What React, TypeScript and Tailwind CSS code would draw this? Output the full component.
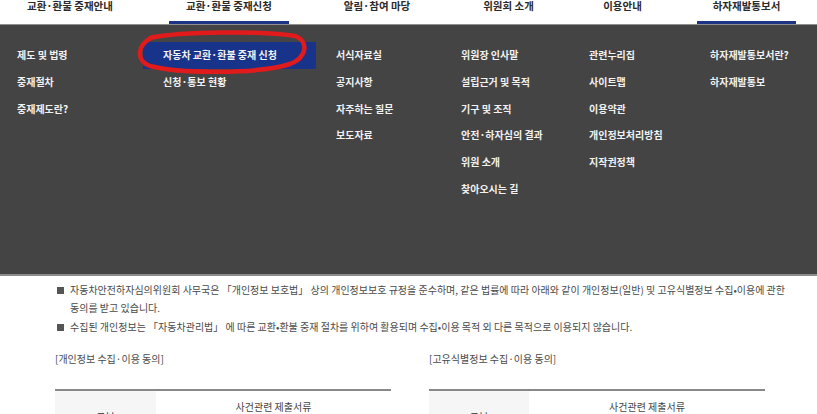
import React from "react";

const navItems = [
  { label: "교환·환불 중재안내", w: "w-[118px]", active: false },
  { label: "교환·환불 중재신청", w: "w-[120px]", active: true },
  { label: "알림·참여 마당", w: "w-[98px]", active: false },
  { label: "위원회 소개", w: "w-[81px]", active: false },
  { label: "이용안내", w: "w-[69px]", active: false },
  { label: "하자재발통보서", w: "w-[99px]", active: true },
];

const gaps = ["", "ml-[40px]", "ml-[39px]", "ml-[42px]", "ml-[39px]", "ml-[40px]"];

function SubItem({ children }: { children: React.ReactNode }) {
  return (
    <div className="h-[26.67px] flex items-center whitespace-nowrap text-[10px] leading-[10px] font-bold text-[#f2f2f2]">
      {children}
    </div>
  );
}

export default function App() {
  return (
    <div
      className="relative w-[817px] h-[414px] overflow-hidden bg-white"
      style={{ fontFamily: '"Noto Sans CJK KR", "Noto Sans", sans-serif' }}
    >
      {/* top nav */}
      <div className="flex h-[24px] pl-[11px] bg-white">
        {navItems.map((n, i) => (
          <div key={n.label} className={`${n.w} ${gaps[i]} flex flex-col`}>
            <div className="flex-1 text-center text-[10.5px] leading-[11px] font-bold text-[#2a2a2a] whitespace-nowrap">
              {n.label}
            </div>
            <div className={`h-[3px] ${n.active ? "bg-[#1c3386]" : ""}`} />
          </div>
        ))}
      </div>
      <div className="h-[1px] bg-[#8f8f8f]" />

      {/* dark mega menu */}
      <div className="h-[249px] bg-[#444444] pt-[17px] flex">
        <div className="w-[143px] pl-[17px]">
          <SubItem>제도 및 법령</SubItem>
          <SubItem>중재절차</SubItem>
          <SubItem>중재제도란?</SubItem>
        </div>
        <div className="w-[193px]">
          <div className="w-[173px] bg-[#17348a] pl-[20px]">
            <SubItem>자동차 교환·환불 중재 신청</SubItem>
          </div>
          <div className="pl-[20px]">
            <SubItem>신청·통보 현황</SubItem>
          </div>
        </div>
        <div className="w-[125px]">
          <SubItem>서식자료실</SubItem>
          <SubItem>공지사항</SubItem>
          <SubItem>자주하는 질문</SubItem>
          <SubItem>보도자료</SubItem>
        </div>
        <div className="w-[128px]">
          <SubItem>위원장 인사말</SubItem>
          <SubItem>설립근거 및 목적</SubItem>
          <SubItem>기구 및 조직</SubItem>
          <SubItem>안전·하자심의 결과</SubItem>
          <SubItem>위원 소개</SubItem>
          <SubItem>찾아오시는 길</SubItem>
        </div>
        <div className="w-[121px]">
          <SubItem>관련누리집</SubItem>
          <SubItem>사이트맵</SubItem>
          <SubItem>이용약관</SubItem>
          <SubItem>개인정보처리방침</SubItem>
          <SubItem>지작권정책</SubItem>
        </div>
        <div className="flex-1">
          <SubItem>하자재발통보서란?</SubItem>
          <SubItem>하자재발통보</SubItem>
        </div>
      </div>
      <div className="h-[2px] bg-[#8c8c8c]" />

      {/* content */}
      <div className="pt-[5px] text-[10px] text-[#4a4a4a]">
        <div className="pl-[57px] flex">
          <div className="w-[7px] h-[7px] bg-[#555555] mt-[5.5px] shrink-0" />
          <div className="pl-[6px] leading-[18px]">
            <div className="whitespace-nowrap">
              자동차안전하자심의위원회 사무국은 「개인정보 보호법」 상의 개인정보보호 규정을 준수하며, 같은 법률에 따라 아래와 같이 개인정보(일반) 및 고유식별정보 수집•이용에 관한
            </div>
            <div className="whitespace-nowrap">동의를 받고 있습니다.</div>
          </div>
        </div>
        <div className="pl-[57px] flex mt-[1px]">
          <div className="w-[7px] h-[7px] bg-[#555555] mt-[5.5px] shrink-0" />
          <div className="pl-[6px] leading-[18px] whitespace-nowrap">
            수집된 개인정보는 「자동차관리법」 에 따른 교환•환불 중재 절차를 위하여 활용되며 수집•이용 목적 외 다른 목적으로 이용되지 않습니다.
          </div>
        </div>

        <div className="flex mt-[14px]">
          <div className="ml-[55px] w-[336px]">
            <div className="leading-[18px] whitespace-nowrap">[개인정보 수집·이용 동의]</div>
            <div className="mt-[21px] border-t-2 border-[#888888] flex h-[40px]">
              <div className="w-[101px] bg-[#f6f6f6] flex items-center justify-center pt-[12px] text-[#333]">구분</div>
              <div className="flex-1 text-center pt-[11px] leading-[10px] text-[#444]">사건관련 제출서류</div>
            </div>
          </div>
          <div className="ml-[38px] w-[336px]">
            <div className="leading-[18px] whitespace-nowrap">[고유식별정보 수집·이용 동의]</div>
            <div className="mt-[21px] border-t-2 border-[#888888] flex h-[40px]">
              <div className="w-[100px] bg-[#f6f6f6] flex items-center justify-center pt-[12px] text-[#333]">구분</div>
              <div className="flex-1 text-center pt-[11px] leading-[10px] text-[#444]">사건관련 제출서류</div>
            </div>
          </div>
        </div>
      </div>

      {/* red annotation */}
      <svg className="absolute left-0 top-0 pointer-events-none" width="817" height="414" viewBox="0 0 817 414">
        <path
          d="M 150 38 C 180 31, 270 31, 295 36 C 310 42, 306 58, 290 64 C 260 74, 180 74, 150 66 C 136 61, 136 45, 153 37"
          fill="none"
          stroke="#e11b1b"
          strokeWidth="4.5"
          strokeLinecap="round"
        />
      </svg>
    </div>
  );
}
